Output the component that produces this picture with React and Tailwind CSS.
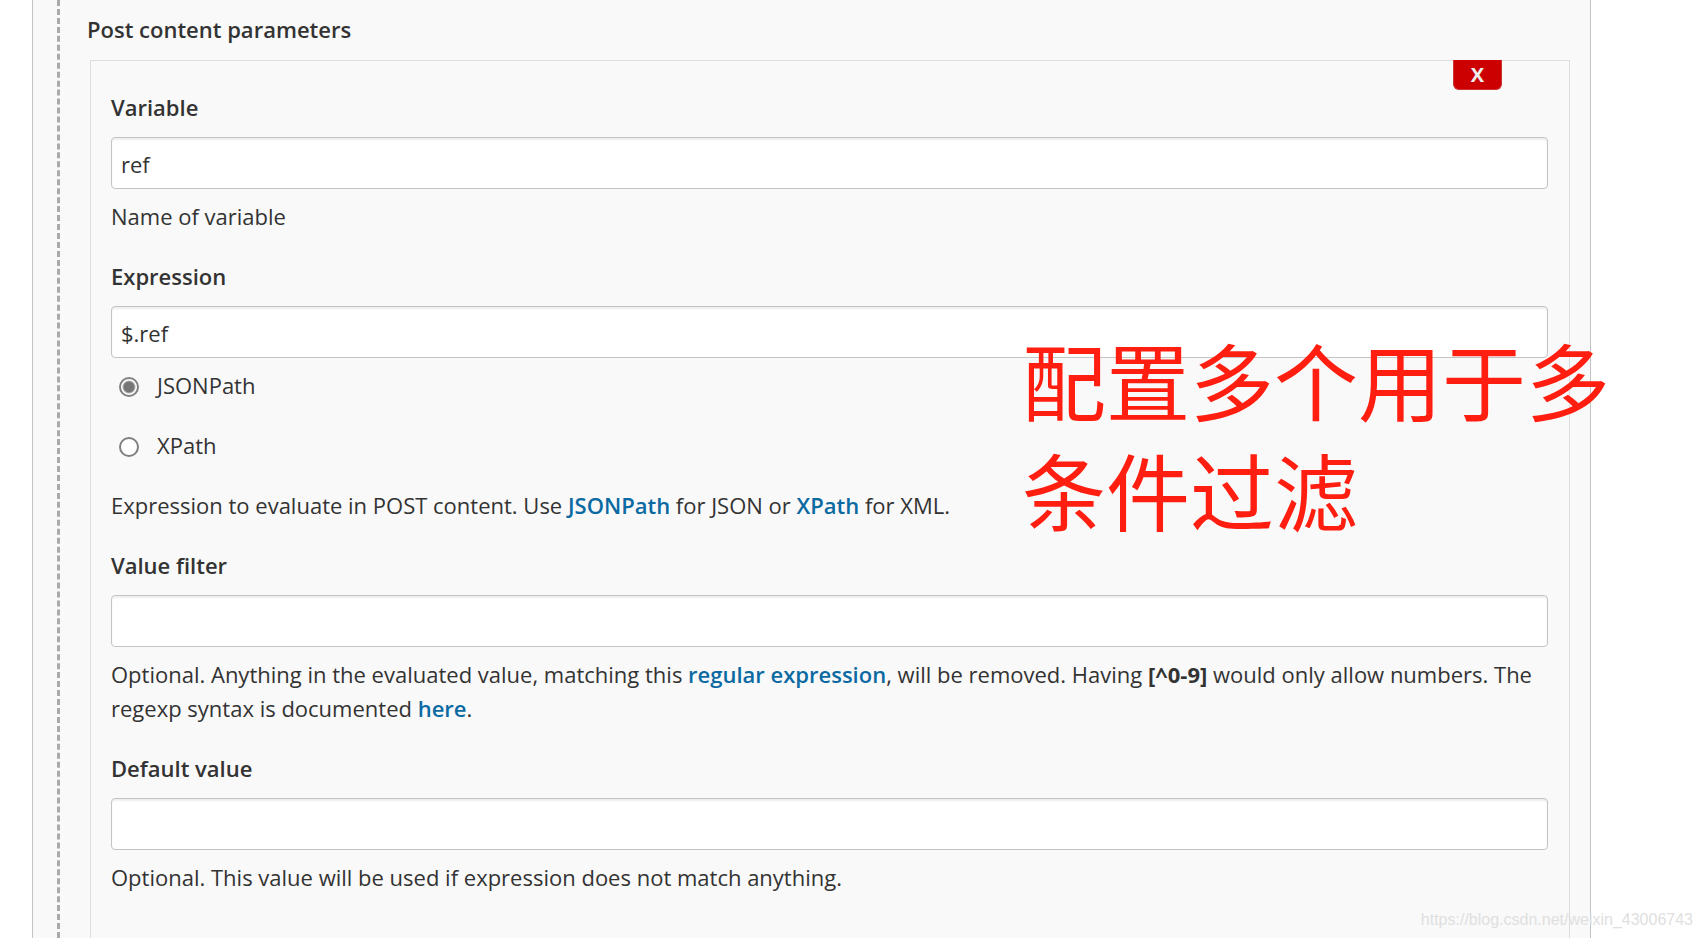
import React, { useState } from 'react';

const linkClass = 'font-semibold text-[#0b6aa2] no-underline hover:underline';

const TextField = ({ id, label, value, onChange, children }) => (
  <div className="mb-[26px]">
    <label htmlFor={id} className="mb-[13px] block font-semibold">
      {label}
    </label>
    <input
      id={id}
      type="text"
      value={value}
      onChange={(e) => onChange(e.target.value)}
      className="mb-[10px] block h-[52px] w-full rounded-[4px] border border-[#c4c4c4] bg-white px-[9px] pt-0.5 shadow-[inset_0_2px_2px_rgba(0,0,0,0.07)] outline-none"
    />
    {children}
  </div>
);

const RadioOption = ({ id, label, checked, onChange }) => (
  <div className="mb-[26px] flex items-center gap-[18px] pl-2">
    <input
      id={id}
      type="radio"
      name="expressionType"
      checked={checked}
      onChange={onChange}
      className="mt-1 size-5 appearance-none rounded-full border-2 border-[#808080] bg-[radial-gradient(circle,#fff_100%,#fff_100%)] checked:bg-[radial-gradient(circle_at_center,#767676_5px,#fff_7px)]"
    />
    <label htmlFor={id}>{label}</label>
  </div>
);

const App = () => {
  const [variable, setVariable] = useState('ref');
  const [expression, setExpression] = useState('$.ref');
  const [type, setType] = useState('JSONPath');
  const [filter, setFilter] = useState('');
  const [defaultValue, setDefaultValue] = useState('');

  return (
    <div className="relative flex min-h-screen bg-white pl-8 pr-[111px] font-['Open_Sans','Noto_Sans',sans-serif] text-[22px] leading-[34px] text-[#333]">
      <main className="flex flex-1 border-x border-[#c4c4c4] bg-[#f9f9f9] pl-6 pr-5">
        <form className="flex flex-1 flex-col border-l-[3px] border-dashed border-[#aaa] pl-[27px] pt-3">
          <h2 className="mb-[14px] font-semibold">Post content parameters</h2>

          <div className="relative ml-[3px] flex-1 border border-b-0 border-[#ddd] pl-5 pr-[21px] pt-[29px]">
            <button
              type="button"
              className="absolute -top-px right-[67px] h-[30px] w-[49px] rounded-b-[6px] border border-t-0 border-[#c33] bg-[#c00] text-[20px] leading-[28px] font-bold text-[#eee]"
            >
              X
            </button>

            <TextField id="variable" label="Variable" value={variable} onChange={setVariable}>
              <p>Name of variable</p>
            </TextField>

            <TextField id="expression" label="Expression" value={expression} onChange={setExpression}>
              <RadioOption
                id="jsonpath"
                label="JSONPath"
                checked={type === 'JSONPath'}
                onChange={() => setType('JSONPath')}
              />
              <RadioOption
                id="xpath"
                label="XPath"
                checked={type === 'XPath'}
                onChange={() => setType('XPath')}
              />
              <p>
                Expression to evaluate in POST content. Use <a href="#jsonpath" className={linkClass}>JSONPath</a> for
                JSON or <a href="#xpath" className={linkClass}>XPath</a> for XML.
              </p>
            </TextField>

            <TextField id="filter" label="Value filter" value={filter} onChange={setFilter}>
              <p>
                Optional. Anything in the evaluated value, matching this{' '}
                <a href="#regex" className={linkClass}>regular expression</a>, will be removed. Having{' '}
                <b>[^0-9]</b> would only allow numbers. The regexp syntax is documented{' '}
                <a href="#syntax" className={linkClass}>here</a>.
              </p>
            </TextField>

            <TextField id="default" label="Default value" value={defaultValue} onChange={setDefaultValue}>
              <p>Optional. This value will be used if expression does not match anything.</p>
            </TextField>
          </div>
        </form>
      </main>

      {/* note pinned over the form */}
      <p className="pointer-events-none absolute top-[324px] right-[92px] w-[588px] font-['Noto_Sans_CJK_SC',sans-serif] text-[84px] leading-[110px] text-[#ff1e10]">
        配置多个用于多条件过滤
      </p>

      <span className="pointer-events-none absolute right-[9px] bottom-[6px] font-['Liberation_Sans',sans-serif] text-[16px] leading-6 text-[#e0e0e0]">
        https://blog.csdn.net/weixin_43006743
      </span>
    </div>
  );
};

export default App;
